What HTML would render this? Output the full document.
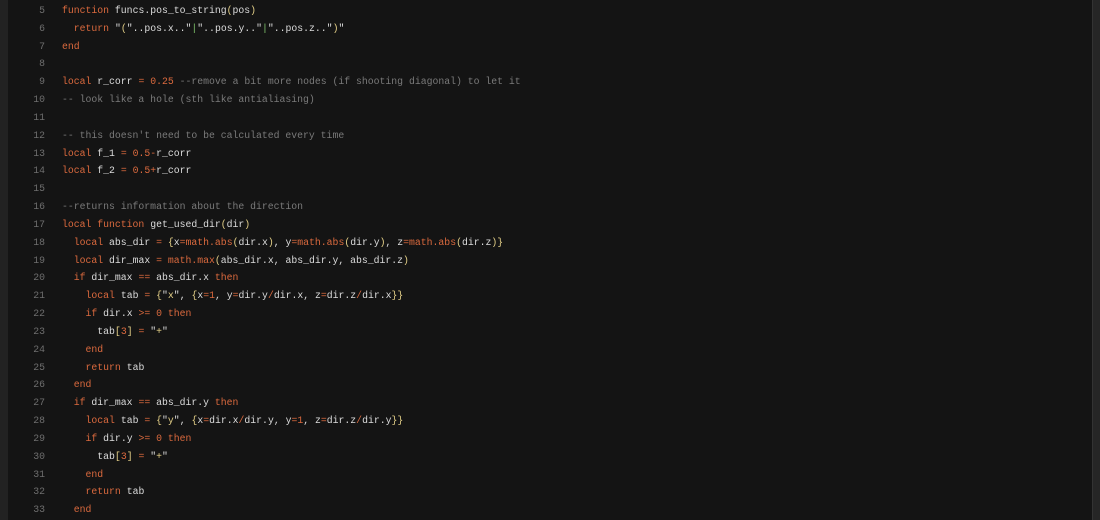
<!DOCTYPE html><html><head><style>
body{margin:0;width:1100px;height:520px;background:#141414;overflow:hidden;position:relative;font-family:"Liberation Mono","DejaVu Sans Mono",monospace;}
.l{position:absolute;left:0;top:0;width:8px;height:520px;background:#222}
.r{position:absolute;left:1092px;top:0;width:8px;height:520px;background:#262626;border-left:1px solid #333}
pre{margin:0;position:absolute;top:2px;font-size:9.8px;line-height:17.83px;color:#dcdcdc;font-family:inherit}
.n{left:0;width:45px;text-align:right;color:#6e6e6e}
.c{left:62px}
.k{color:#dc6a3e}.s{color:#e3cf87}.m{color:#7a7a7a}.p{color:#e3cf87}.q{color:#ddd}.v{color:#7ec26a}
</style></head><body><div class="l"></div><div class="r"></div>
<pre class="n">5
6
7
8
9
10
11
12
13
14
15
16
17
18
19
20
21
22
23
24
25
26
27
28
29
30
31
32
33</pre>
<pre class="c"><span class="k">function</span> funcs.pos_to_string<span class="p">(</span>pos<span class="p">)</span>
  <span class="k">return</span> <span class="q">"</span><span class="s">(</span><span class="q">"..</span>pos.x<span class="q">.."</span><span class="v">|</span><span class="q">"..</span>pos.y<span class="q">.."</span><span class="v">|</span><span class="q">"..</span>pos.z<span class="q">.."</span><span class="s">)</span><span class="q">"</span>
<span class="k">end</span>

<span class="k">local</span> r_corr <span class="k">=</span> <span class="k">0.25</span> <span class="m">--remove a bit more nodes (if shooting diagonal) to let it</span>
<span class="m">-- look like a hole (sth like antialiasing)</span>

<span class="m">-- this doesn't need to be calculated every time</span>
<span class="k">local</span> f_1 <span class="k">=</span> <span class="k">0.5-</span>r_corr
<span class="k">local</span> f_2 <span class="k">=</span> <span class="k">0.5+</span>r_corr

<span class="m">--returns information about the direction</span>
<span class="k">local function</span> get_used_dir<span class="p">(</span>dir<span class="p">)</span>
  <span class="k">local</span> abs_dir <span class="k">=</span> <span class="p">{</span>x<span class="k">=math.abs</span><span class="p">(</span>dir.x<span class="p">)</span>, y<span class="k">=math.abs</span><span class="p">(</span>dir.y<span class="p">)</span>, z<span class="k">=math.abs</span><span class="p">(</span>dir.z<span class="p">)}</span>
  <span class="k">local</span> dir_max <span class="k">= math.max</span><span class="p">(</span>abs_dir.x, abs_dir.y, abs_dir.z<span class="p">)</span>
  <span class="k">if</span> dir_max <span class="k">==</span> abs_dir.x <span class="k">then</span>
    <span class="k">local</span> tab <span class="k">=</span> <span class="p">{</span><span class="q">"</span><span class="s">x</span><span class="q">"</span>, <span class="p">{</span>x<span class="k">=1</span>, y<span class="k">=</span>dir.y<span class="k">/</span>dir.x, z<span class="k">=</span>dir.z<span class="k">/</span>dir.x<span class="p">}}</span>
    <span class="k">if</span> dir.x <span class="k">&gt;= 0 then</span>
      tab<span class="p">[</span><span class="k">3</span><span class="p">]</span> <span class="k">=</span> <span class="q">"</span><span class="s">+</span><span class="q">"</span>
    <span class="k">end</span>
    <span class="k">return</span> tab
  <span class="k">end</span>
  <span class="k">if</span> dir_max <span class="k">==</span> abs_dir.y <span class="k">then</span>
    <span class="k">local</span> tab <span class="k">=</span> <span class="p">{</span><span class="q">"</span><span class="s">y</span><span class="q">"</span>, <span class="p">{</span>x<span class="k">=</span>dir.x<span class="k">/</span>dir.y, y<span class="k">=1</span>, z<span class="k">=</span>dir.z<span class="k">/</span>dir.y<span class="p">}}</span>
    <span class="k">if</span> dir.y <span class="k">&gt;= 0 then</span>
      tab<span class="p">[</span><span class="k">3</span><span class="p">]</span> <span class="k">=</span> <span class="q">"</span><span class="s">+</span><span class="q">"</span>
    <span class="k">end</span>
    <span class="k">return</span> tab
  <span class="k">end</span></pre>
</body></html>
